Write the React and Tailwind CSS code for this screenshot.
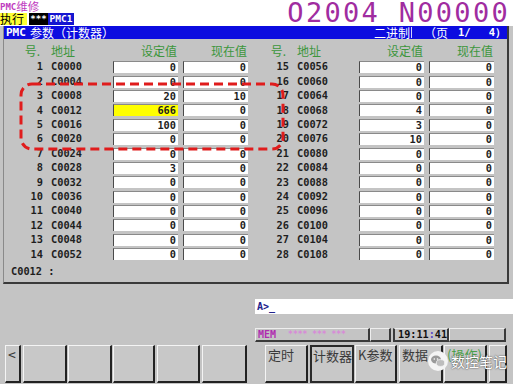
import React from "react";

const CJK = { fontFamily: '"Noto Sans CJK SC", "Noto Sans", sans-serif' };
const MONO = { fontFamily: '"DejaVu Sans Mono", "Liberation Mono", monospace' };

const leftRows = [
  [1, "C0000", "0", "0"],
  [2, "C0004", "0", "0"],
  [3, "C0008", "20", "10"],
  [4, "C0012", "666", "0", true],
  [5, "C0016", "100", "0"],
  [6, "C0020", "0", "0"],
  [7, "C0024", "0", "0"],
  [8, "C0028", "3", "0"],
  [9, "C0032", "0", "0"],
  [10, "C0036", "0", "0"],
  [11, "C0040", "0", "0"],
  [12, "C0044", "0", "0"],
  [13, "C0048", "0", "0"],
  [14, "C0052", "0", "0"],
];
const rightRows = [
  [15, "C0056", "0", "0"],
  [16, "C0060", "0", "0"],
  [17, "C0064", "0", "0"],
  [18, "C0068", "4", "0"],
  [19, "C0072", "3", "0"],
  [20, "C0076", "10", "0"],
  [21, "C0080", "0", "0"],
  [22, "C0084", "0", "0"],
  [23, "C0088", "0", "0"],
  [24, "C0092", "0", "0"],
  [25, "C0096", "0", "0"],
  [26, "C0100", "0", "0"],
  [27, "C0104", "0", "0"],
  [28, "C0108", "0", "0"],
];

function Group({ r, extra }) {
  const [no, addr, set, cur, hl] = r;
  return (
    <div className={"flex items-center h-full " + extra}>
      <div className="w-[39px] text-right">{no}</div>
      <div className="w-[70px] pl-[8px]">{addr}</div>
      <div
        className={
          "w-[65px] h-[12px] border-l border-t border-l-[#4a4a4a] border-t-[#8a8a8a] text-right pr-[2px] leading-[11px] " +
          (hl ? "bg-[#ffff00]" : "bg-white")
        }
      >
        {set}
      </div>
      <div className="ml-[5px] w-[65px] h-[12px] border-l border-t border-l-[#4a4a4a] border-t-[#8a8a8a] bg-white text-right pr-[2px] leading-[11px]">
        {cur}
      </div>
    </div>
  );
}

function HeaderGroup({ extra }) {
  return (
    <div className={"flex items-center " + extra} style={CJK}>
      <div className="w-[39px] text-right pr-[3px]">号.</div>
      <div className="w-[70px] pl-[8px]">地址</div>
      <div className="w-[65px] text-right pr-[1px]">设定值</div>
      <div className="ml-[5px] w-[65px] text-right pr-[1px]">现在值</div>
    </div>
  );
}

const keys = [
  { w: 16, ml: 5, label: "<", mono: true },
  { w: 44, ml: 2 },
  { w: 44, ml: 1 },
  { w: 42, ml: 1 },
  { w: 43, ml: 2 },
  { w: 45, ml: 2 },
  { w: 43, ml: 18, label: "定时" },
  { w: 44, ml: 2, label: "计数器", pressed: true },
  { w: 42, ml: 1, label: "K参数" },
  { w: 44, ml: 2, label: "数据" },
  { w: 43, ml: 1, label: "(操作)", green: true },
  { w: 18, ml: 2, label: "" },
];

export default function App() {
  return (
    <div className="w-[513px] h-[384px] bg-[#c4c4c4] relative overflow-hidden flex flex-col">
      {/* top area */}
      <div className="h-[26px] bg-white flex shrink-0">
        <div className="flex flex-col w-[120px]">
          <div className="h-[12px] flex items-end text-[#c03cc0] leading-[12px]">
            <span className="text-[9px] font-bold leading-[10px]" style={MONO}>PMC</span>
            <span className="text-[11.5px] leading-[12px]" style={CJK}>维修</span>
          </div>
          <div className="flex h-[12px] mt-[1px]">
            <span className="bg-[#ffff33] w-[27px] h-full text-[12px] leading-[12px] text-black whitespace-nowrap" style={CJK}>执行</span>
            <span className="ml-[2px] bg-black w-[19px] h-full text-white text-[9px] font-bold leading-[12px] text-center" style={MONO}>***</span>
            <span className="bg-[#1515d0] w-[26px] h-full text-white text-[9.5px] font-bold leading-[12px] text-center" style={MONO}>PMC1</span>
          </div>
        </div>
        <div
          className="flex-1 flex justify-end items-center pr-[3px] text-[27px] leading-[26px] tracking-[2.3px] text-[#a02ca0]"
          style={MONO}
        >
          O2004 N00000
        </div>
      </div>

      {/* main panel */}
      <div className="ml-[3px] w-[506px] h-[258px] shrink-0 border-l border-l-[#8a8a8a] border-r-2 border-b-2 border-r-[#3a3a3a] border-b-[#3a3a3a] flex flex-col">
        <div className="h-[13px] bg-[#0c0ce0] text-white flex items-center shrink-0 text-[12px] leading-[13px] whitespace-nowrap">
          <span className="ml-[2px] text-[11px] font-bold" style={MONO}>PMC</span>
          <span className="ml-[4px]" style={CJK}>参数（计数器）</span>
          <span className="ml-auto" style={CJK}>二进制</span>
          <span className="w-[1px] h-[11px] bg-[#d0d0ff] ml-[1px]"></span>
          <span className="ml-[12px]" style={CJK}>（页</span>
          <span className="ml-[10px] font-bold text-[10.5px]" style={MONO}>1/</span>
          <span className="ml-[18px] font-bold text-[10.5px] mr-[1px]" style={MONO}>4）</span>
        </div>
        <div className="h-[21px] flex items-center pt-[3px] text-[12px] leading-[14px] text-[#3c963c] shrink-0">
          <HeaderGroup extra="ml-[0px]" />
          <HeaderGroup extra="ml-[2px]" />
        </div>
        <div className="flex flex-col text-[10.3px] font-bold text-[#1e1e1e]" style={MONO}>
          {leftRows.map((r, i) => (
            <div key={i} className="h-[14.4px] flex">
              <Group r={r} extra="" />
              <Group r={rightRows[i]} extra="ml-[2px]" />
            </div>
          ))}
        </div>
        <div className="flex-1 flex items-center pl-[7px] text-[10.3px] font-bold text-[#1e1e1e]" style={MONO}>
          C0012 :
        </div>
      </div>

      {/* lower area */}
      <div className="flex flex-col flex-1">
        <div className="mt-[15px] ml-[255px] h-[15px] bg-white flex items-center pl-[2px] text-[10px] font-bold text-[#23238c]" style={MONO}>
          A&gt;_
        </div>
        <div className="mt-[14px] ml-[255px] h-[14px] flex text-[10px] font-bold" style={MONO}>
          <div className="w-[115px] h-full border-t border-l border-t-[#eeeeee] border-l-[#eeeeee] border-r-2 border-b-2 border-r-[#3a3a3a] border-b-[#3a3a3a] flex items-center leading-[11px]">
            <span className="ml-[2px] text-[#b02cb0]">MEM</span>
            <span className="ml-[12px] text-[#d88ad8] text-[8px]">**** *** ***</span>
          </div>
          <div className="w-[21px] h-full border-t border-l border-t-[#eeeeee] border-l-[#eeeeee] border-r-2 border-b-2 border-r-[#3a3a3a] border-b-[#3a3a3a]"></div>
          <div className="ml-[2px] w-[56px] h-full border-t border-l-2 border-t-[#eeeeee] border-l-[#3a3a3a] border-r-2 border-b-2 border-r-[#3a3a3a] border-b-[#3a3a3a] flex items-center pl-[3px] text-[10.2px] text-[#111] leading-[11px] whitespace-nowrap">
            19:11<span className="text-[#5a4ac8]">:</span>41
          </div>
          <div className="w-[57px] h-full border-t border-l border-t-[#eeeeee] border-l-[#eeeeee] border-r-2 border-b-2 border-r-[#3a3a3a] border-b-[#3a3a3a]"></div>
        </div>
        <div className="mt-[3px] flex h-[38px]">
          {keys.map((k, i) => (
            <div
              key={i}
              style={{ width: k.w + "px", marginLeft: k.ml + "px", ...(k.mono ? MONO : CJK) }}
              className={
                "h-full flex items-start text-[13px] leading-[16px] pt-[1px] whitespace-nowrap overflow-visible " +
                (k.pressed
                  ? "border-2 border-[#2a2a2a] bg-[#c8c8c8] pl-[1px]"
                  : "border-t border-l border-t-[#f4f4f4] border-l-[#f4f4f4] border-r-2 border-b-2 border-r-[#222222] border-b-[#222222] bg-[#c8c8c8] pl-[2px]") +
                (k.green ? " text-[#4aa04a]" : " text-[#3a3a3a]")
              }
            >
              {k.label}
            </div>
          ))}
        </div>
      </div>

      {/* red dashed highlight overlay */}
      <svg className="absolute left-0 top-0 pointer-events-none" width="513" height="384">
        <rect x="21" y="84" width="262" height="65" rx="11" ry="11" fill="none" stroke="#e01c1c" strokeWidth="3" strokeDasharray="9 5" />
      </svg>

      {/* watermark */}
      <div className="absolute left-[427px] top-[350px] flex items-center pointer-events-none">
        <svg width="22" height="22" viewBox="0 0 22 22">
          <circle cx="11" cy="11" r="10" fill="#f4f4f4" />
          <ellipse cx="9" cy="9.5" rx="5" ry="4" fill="#9a9a9a" />
          <ellipse cx="13.5" cy="13" rx="4.2" ry="3.4" fill="#bdbdbd" stroke="#f4f4f4" strokeWidth="0.8" />
          <circle cx="7.3" cy="9" r="0.8" fill="#fff" />
          <circle cx="10.5" cy="9" r="0.8" fill="#fff" />
        </svg>
        <span
          className="ml-[2px] text-[14px] text-white leading-[18px]"
          style={{ ...CJK, textShadow: "0 0 2px #555, 0 0 1px #555" }}
        >
          数控笔记
        </span>
      </div>
    </div>
  );
}
